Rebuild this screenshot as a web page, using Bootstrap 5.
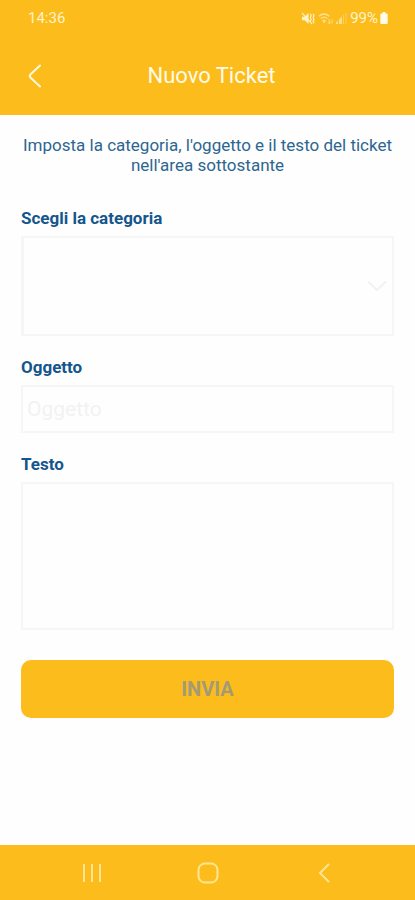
<!DOCTYPE html>
<html lang="it">
<head>
<meta charset="utf-8">
<meta name="viewport" content="width=device-width, initial-scale=1">
<title>Nuovo Ticket</title>
<link href="https://cdn.jsdelivr.net/npm/bootstrap@5.3.0/dist/css/bootstrap.min.css" rel="stylesheet">
<style>
:root { --brand: #fcbc1c; --ink: #14568c; --cream: #fff3cc; --line: #f6f6f6; }
body { font-family: Roboto, "Liberation Sans", sans-serif; color: var(--ink); background: #fefefe; }
.bar { background: var(--brand); color: var(--cream); }
.status { height: 36px; padding: 0 27px 0 28px; font-size: 15px; line-height: 20px; }
.signals { gap: 3px; }
.charge { gap: 2px; }
.titlebar { height: 79px; padding: 0 18px 0 22px; }
.titlebar h1 { font-size: 22px; line-height: 28px; font-weight: 400; color: #fffbe9; }
.side { width: 26px; height: 40px; }
.title-end { width: 22px; }
.page { padding: 20px 21px; }
.intro { font-size: 17px; line-height: 20px; margin-bottom: 33px; color: #2c6690; }
.field { margin-bottom: 21px; }
.field .form-label { font-size: 17px; line-height: 20px; font-weight: 700; margin-bottom: 8px; }
.field .form-control, .field .form-select { border: 2px solid var(--line); background-color: #fefefe; font-size: 21px; padding: 0 4px; }
.field .form-select {
  height: 100px; border-left-width: 3px; padding-right: 32px;
  background-image: url("data:image/svg+xml,%3Csvg xmlns='http://www.w3.org/2000/svg' viewBox='0 0 20 12'%3E%3Cpath d='M1 1.5L10 10L19 1.5' fill='none' stroke='%23f2f2f2' stroke-width='2'/%3E%3C/svg%3E");
  background-size: 20px 12px; background-position: right 5px center;
}
.field input.form-control { height: 48px; }
.field textarea.form-control { height: 148px; resize: none; }
.field .form-control::placeholder { color: #f2f2f2; }
.send { height: 58px; margin-top: 9px; border-radius: 10px; background: var(--brand); color: #a39a76; font-size: 20px; font-weight: 700; }
.send:hover { background: var(--brand); color: #8d8565; }
.sysnav { height: 55px; }
.sysnav .btn { color: #ffe593; width: 116px; }
</style>
<script defer src="https://cdn.jsdelivr.net/npm/bootstrap@5.3.0/dist/js/bootstrap.bundle.min.js"></script>
</head>
<body class="min-vh-100 d-flex flex-column">
<header class="bar">
  <div class="status d-flex justify-content-between align-items-center">
    <span>14:36</span>
    <div class="signals d-flex align-items-center">
      <svg width="14" height="13" viewBox="0 0 15 14" fill="none" stroke="currentColor" aria-hidden="true">
        <path d="M1 5h3l4-4v12l-4-4H1z" fill="currentColor" stroke="none"/>
        <path d="M1 1l11 12M10 2l1 2-1 2 1 2-1 2M13 2l1 2-1 2 1 2-1 2 1 2" stroke-width="1.2"/>
      </svg>
      <svg width="15" height="13" viewBox="0 0 16 14" fill="none" stroke="currentColor" stroke-width="1.500" opacity=".7" aria-hidden="true">
        <path d="M1 4.500Q6.500 0 12 4.500M3 7Q6.500 4 10 7M5 9.500Q6.500 8 8 9.500"/>
        <path d="M6.500 12l-2-2h4z" fill="currentColor" stroke="none"/>
        <path d="M12 7.500v5M10.500 11L12 12.600l1.500-1.600M15 12.500V8" stroke-width="1"/>
      </svg>
      <svg width="11" height="12" viewBox="0 0 11 12" fill="currentColor" opacity=".6" aria-hidden="true">
        <path d="M0 12v-1.500l2-2V12zM3 12V7.500l3-3V12z"/><path d="M7 12V3.500l1-1V12zM9.500 12V1l1-1v12z" opacity=".6"/>
      </svg>
      <div class="charge d-flex align-items-center">
        <span>99%</span>
        <svg width="8" height="12" viewBox="0 0 8 13" fill="#fffbe9" aria-hidden="true"><path d="M2.500 0h3v1.500H7q1 0 1 1V12q0 1-1 1H1q-1 0-1-1V2.500q0-1 1-1h1.500z"/></svg>
      </div>
    </div>
  </div>
  <div class="titlebar d-flex justify-content-between align-items-center">
    <button type="button" class="side btn p-0 border-0 d-flex align-items-center justify-content-center" aria-label="Indietro">
      <svg width="14" height="24" viewBox="0 0 14 24" fill="none" stroke="#fff8de" stroke-width="2" stroke-linecap="round" stroke-linejoin="round"><path d="M12 1.500L2.400 10.600Q1.200 12 2.400 13.400L12 22.500"/></svg>
    </button>
    <h1 class="m-0">Nuovo Ticket</h1>
    <span class="title-end"></span>
  </div>
</header>
<main class="flex-grow-1">
  <form class="page">
    <p class="intro text-center">Imposta la categoria, l'oggetto e il testo del ticket nell'area sottostante</p>
    <div class="field">
      <label class="form-label d-block" for="categoria">Scegli la categoria</label>
      <select class="form-select rounded-0" id="categoria"><option value=""></option></select>
    </div>
    <div class="field">
      <label class="form-label d-block" for="oggetto">Oggetto</label>
      <input type="text" class="form-control rounded-0" id="oggetto" placeholder="Oggetto">
    </div>
    <div class="field">
      <label class="form-label d-block" for="testo">Testo</label>
      <textarea class="form-control rounded-0 d-block" id="testo"></textarea>
    </div>
    <button type="submit" class="send btn border-0 w-100">INVIA</button>
  </form>
</main>
<nav class="bar sysnav d-flex justify-content-center align-items-center" aria-label="Sistema">
  <button type="button" class="btn p-0 border-0" aria-label="App recenti">
    <svg width="20" height="20" viewBox="0 0 20 20" stroke="currentColor" stroke-width="2"><path d="M2 1v18M10 1v18M18 1v18"/></svg>
  </button>
  <button type="button" class="btn p-0 border-0" aria-label="Home">
    <svg width="22" height="22" viewBox="0 0 22 22" fill="none" stroke="currentColor" stroke-width="2"><rect x="1.500" y="1.500" width="19" height="19" rx="6.500"/></svg>
  </button>
  <button type="button" class="btn p-0 border-0" aria-label="Indietro di sistema">
    <svg width="12" height="20" viewBox="0 0 12 20" fill="none" stroke="currentColor" stroke-width="2"><path d="M11 1L2 10l9 9"/></svg>
  </button>
</nav>
</body>
</html>
